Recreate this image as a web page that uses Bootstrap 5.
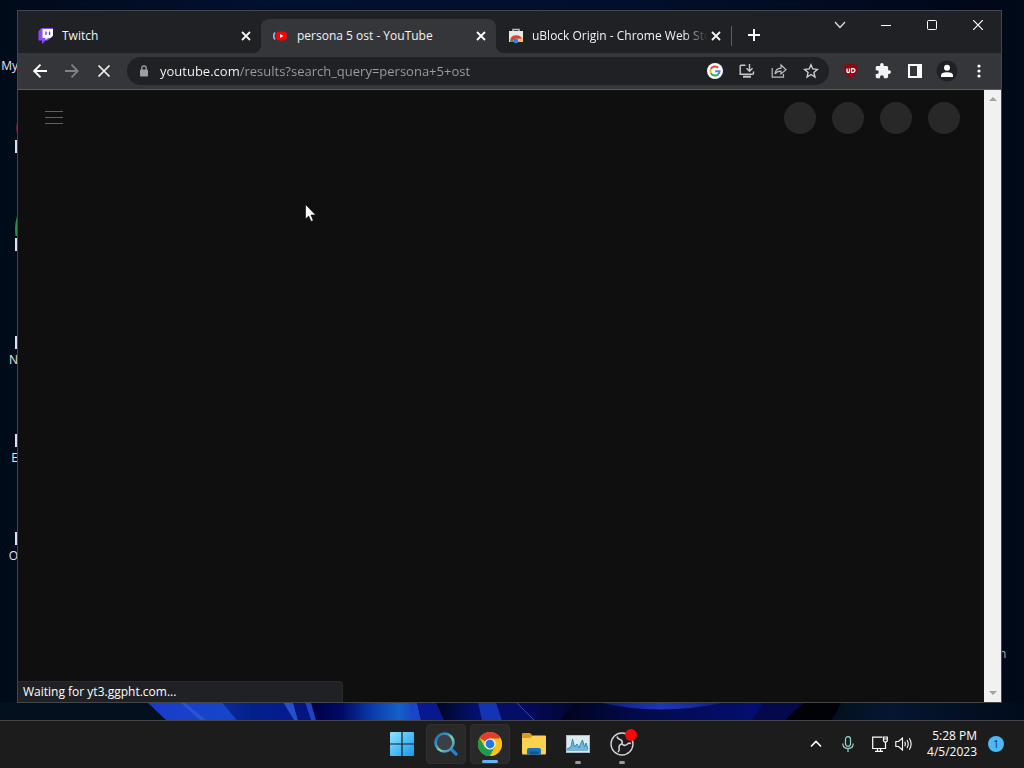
<!DOCTYPE html>
<html lang="en">
<head>
<meta charset="utf-8">
<meta name="viewport" content="width=device-width, initial-scale=1">
<title>Desktop</title>
<link href="https://cdn.jsdelivr.net/npm/bootstrap@5.3.0/dist/css/bootstrap.min.css" rel="stylesheet">
<style>
:root { --ui: "Open Sans", "Noto Sans", sans-serif; }
body { font-family: var(--ui); font-size: 12px; line-height: 16px; color: #fff; background: #000b1c; }
button { color: inherit; background: none; border: 0; padding: 0; }
svg { display: block; flex: none; }
.desk { min-height: 0; background: linear-gradient(90deg, #000b1a 0, #001030 25%, #00102c 60%, #00081a 96%, #000a18 100%); }
.wallpaper { left: 0; bottom: 0; width: 100%; height: 18px; }
.side-left { width: 17px; padding-top: 39px; }
.shortcut { height: 98px; }
.shortcut-pic { height: 19px; padding-top: 3px; }
.shortcut-pic span { display: block; width: 2px; height: 13px; background: #dde1ea; }
.shortcut-lbl { height: 16px; margin-right: -1px; color: #e3e6ea; }
.app-edges { left: 15px; top: 110px; }
.side-right { width: 22px; padding-bottom: 58px; text-indent: -3px; color: #aab4c0; }
.browser { margin: 10px 0 17px; border: 1px solid #45474b; min-width: 0; background: #0f0f0f; z-index: 1; }
.tabstrip { background: #202124; height: 42px; padding-left: 8px; }
.tab-item { flex: 0 1 235px; min-width: 0; height: 34px; margin-top: 8px; padding: 0 7px 0 12px; position: relative; }
.tab-item.on { background: #35363a; border-radius: 8px 8px 0 0; }
.tab-item.on::before, .tab-item.on::after { content: ""; position: absolute; bottom: 0; width: 8px; height: 8px; }
.tab-item.on::before { left: -8px; background: radial-gradient(circle at 0 0, transparent 8px, #35363a 8px); }
.tab-item.on::after { right: -8px; background: radial-gradient(circle at 100% 0, transparent 8px, #35363a 8px); }
.tab-title { min-width: 0; font-size: 12px; margin-left: 8px; text-align: left; white-space: nowrap; overflow: hidden; color: #f1f3f4; }
.fade-end { -webkit-mask-image: linear-gradient(90deg, #000 86%, transparent 100%); mask-image: linear-gradient(90deg, #000 86%, transparent 100%); }
.tab-x, .lock { width: 16px; height: 16px; flex: none; }
.tab-sep { width: 1px; height: 20px; margin-top: 15px; background: #5b5d61; }
.new-tab { width: 28px; height: 28px; margin: 10px 0 0 8px; }
.winctl { width: 46px; height: 28px; }
.toolbar { background: #35363a; height: 37px; border-bottom: 1px solid #5c5d60; padding: 0 6px; }
.tool { width: 32px; height: 32px; }
.omni { height: 28px; background: #202124; border-radius: 14px; margin: 0 6px 0 7px; padding: 0 2px 0 9px; }
.url { min-width: 0; height: 22px; border: 0; outline: 0; padding: 0; margin-left: 8px; font-size: 13px;
  color: transparent; -webkit-text-fill-color: transparent;
  background: linear-gradient(90deg, #fff 80px, #9aa0a6 80px); -webkit-background-clip: text; background-clip: text; }
.masthead { height: 56px; padding: 0 24px 0 27px; }
.ghost { width: 32px; height: 32px; background: #282828; }
.scroller { width: 17px; background: #f1f1f1; padding: 7px 0 7px; }
.status { left: 0; bottom: 0; width: 325px; height: 21px; line-height: 20px; padding-left: 5px; background: #202124; border: 1px solid #292a2d; border-width: 1px 1px 0 0; border-radius: 0 4px 0 0; }
.pointer { left: 287px; top: 114px; }
.taskbar { height: 48px; background: #1c1c1c; border-top: 1px solid #434547; padding-bottom: 1px; }
.task { width: 40px; height: 40px; position: relative; border-radius: 4px; }
.task.lit { background: #292929; border: 1px solid #303030; }
.task.open::after { content: ""; position: absolute; left: 50%; bottom: 0; width: 6px; height: 3px; margin-left: -3px; border-radius: 2px; background: #9a9a9a; }
.task.active::after { width: 16px; margin-left: -8px; background: #60b5ee; }
.tray-ico { width: 32px; height: 40px; }
.tray-ico.slim { width: 24px; }
.clock { margin-right: 11px; padding-left: 11px; text-align: right; white-space: nowrap; }
.notif { width: 16px; height: 16px; margin-right: 20px; background: #4cb8f5; color: #10354c; font-size: 10px; }
</style>
</head>
<body>
<div class="d-flex flex-column vh-100 overflow-hidden">
  <main class="desk flex-grow-1 d-flex position-relative overflow-hidden">
    <svg class="wallpaper position-absolute" viewBox="0 0 1024 18" preserveAspectRatio="none" aria-hidden="true">
      <defs>
        <linearGradient id="sea"><stop offset="0" stop-color="#1a3cc8"/><stop offset="1" stop-color="#1646cc"/></linearGradient>
        <linearGradient id="deep"><stop offset="0" stop-color="#0a2a9c"/><stop offset=".4" stop-color="#03208a"/><stop offset="1" stop-color="#051a90"/></linearGradient>
        <linearGradient id="glow"><stop offset="0" stop-color="#000046"/><stop offset=".3" stop-color="#000a66"/><stop offset=".6" stop-color="#0b3cae"/><stop offset=".85" stop-color="#1460c8"/><stop offset="1" stop-color="#1648c0"/></linearGradient>
        <linearGradient id="fold"><stop offset="0" stop-color="#01051e"/><stop offset=".5" stop-color="#030c50"/><stop offset="1" stop-color="#04107a"/></linearGradient>
        <linearGradient id="dusk"><stop offset="0" stop-color="#040a60"/><stop offset="1" stop-color="#01041e"/></linearGradient>
        <linearGradient id="far"><stop offset="0" stop-color="#01031a"/><stop offset=".25" stop-color="#020a48"/><stop offset=".7" stop-color="#030e70"/><stop offset="1" stop-color="#01031a"/></linearGradient>
        <linearGradient id="crest"><stop offset="0" stop-color="#0a1a80"/><stop offset=".5" stop-color="#1c38b8"/><stop offset="1" stop-color="#0a1c8c"/></linearGradient>
        <linearGradient id="night"><stop offset="0" stop-color="#03101f"/><stop offset=".3" stop-color="#051630"/><stop offset="1" stop-color="#010b1b"/></linearGradient>
      </defs>
      <rect width="1024" height="18" fill="#03111f"/>
      <path d="M147 0H222L237 18H166Z" fill="url(#sea)"/>
      <path d="M180 0H184L206 18H200Z" fill="#2e52d4"/>
      <path d="M222 0H284L298 18H237Z" fill="url(#deep)"/>
      <path d="M283 0H293L298 18H294Z" fill="#2450cc"/>
      <path d="M293 0H306L312 18H298Z" fill="#041480"/>
      <path d="M305 0H311L316 18H311Z" fill="#1e44c4"/>
      <path d="M311 0H410L414 18H316Z" fill="url(#glow)"/>
      <path d="M409 0H417L421 18H413Z" fill="#1c44c8"/>
      <path d="M417 0H436L444 18H421Z" fill="#0a1890"/>
      <path d="M436 0H480L484 18H444Z" fill="url(#fold)"/>
      <path d="M478 0H496L502 18H482Z" fill="#1434b4"/>
      <path d="M496 0H517L535 18H502Z" fill="#050e66"/>
      <path d="M517 0H600V18H535Z" fill="url(#dusk)"/>
      <path d="M516 0L534 18" stroke="#3348a8" fill="none"/>
      <path d="M575 0H842L832 18H560Z" fill="url(#far)"/>
      <path d="M598 0Q660 15 726 0Z" fill="url(#crest)"/>
      <path d="M764 0H810L780 18H752Z" fill="#05084a"/>
      <path d="M805 0H842L832 18H785Z" fill="#010208"/>
      <path d="M842 0H1024V18H832Z" fill="url(#night)"/>
    </svg>

    <div class="side-left position-relative flex-shrink-0">
      <div class="shortcut d-flex flex-column align-items-end"><div class="shortcut-pic"></div><div class="shortcut-lbl">My</div></div>
      <div class="shortcut d-flex flex-column align-items-end"><div class="shortcut-pic"><span></span></div></div>
      <div class="shortcut d-flex flex-column align-items-end"><div class="shortcut-pic"><span></span></div></div>
      <div class="shortcut d-flex flex-column align-items-end"><div class="shortcut-pic"><span></span></div><div class="shortcut-lbl">N</div></div>
      <div class="shortcut d-flex flex-column align-items-end"><div class="shortcut-pic"><span></span></div><div class="shortcut-lbl">E</div></div>
      <div class="shortcut d-flex flex-column align-items-end"><div class="shortcut-pic"><span></span></div><div class="shortcut-lbl">O</div></div>
      <svg class="app-edges position-absolute" width="2" height="140" viewBox="0 0 2 140" aria-hidden="true"><path d="M2 12Q.5 18 2 24Z" fill="#a3222e"/><path d="M2 106Q-1 116 .5 126H2Z" fill="#2f8a4b"/></svg>
    </div>

    <section class="browser flex-grow-1 d-flex flex-column position-relative" aria-label="Browser">
      <div class="tabstrip d-flex flex-shrink-0">
        <div class="tab-item d-flex align-items-center">
          <svg width="16" height="16" viewBox="0 0 16 16" aria-hidden="true"><path d="M3.500 0L.5 3.200V12.500H4V16L7.500 12.500H10L15 8V0Z" fill="#8a4bf0"/><path d="M4.500 1H15V7.500L12.500 10H10L7.500 12.300V10H4.500Z" fill="#fff"/><path d="M8 3.500V7M11.500 3.500V7" stroke="#6a35c8" stroke-width="1.300"/></svg>
          <button class="tab-title flex-grow-1">Twitch</button>
          <button class="tab-x d-flex align-items-center justify-content-center" aria-label="Close tab"><svg width="10" height="10" viewBox="0 0 10 10"><path d="M1 1L9 9M9 1L1 9" stroke="#f4f4f4" stroke-width="1.800"/></svg></button>
        </div>
        <div class="tab-item on d-flex align-items-center">
          <svg width="16" height="16" viewBox="0 0 16 16" aria-hidden="true"><path d="M2 4.500Q-.5 8 2 11.500" fill="none" stroke="#8ab4f8" stroke-width="1.700"/><rect x="3" y="3.500" width="11" height="9" rx="3.500" fill="#f00"/><path d="M7 6L10.500 8L7 10Z" fill="#fff"/></svg>
          <button class="tab-title flex-grow-1">persona 5 ost - YouTube</button>
          <button class="tab-x d-flex align-items-center justify-content-center" aria-label="Close tab"><svg width="10" height="10" viewBox="0 0 10 10"><path d="M1 1L9 9M9 1L1 9" stroke="#fff" stroke-width="1.800"/></svg></button>
        </div>
        <div class="tab-item d-flex align-items-center">
          <svg width="16" height="16" viewBox="0 0 16 16" aria-hidden="true"><path d="M5 4V1.500H11V4" fill="none" stroke="#b9bcc0" stroke-width="1.500"/><path d="M1 3H15V14H1Z" fill="#e8e8e8"/><path d="M2.500 14Q1.500 7.500 8 7.300Q13 7.300 14.500 11.500L8 10.500Q5.500 11 5 14Z" fill="#e33b2e"/><path d="M2.500 14Q2 11.500 3 9.500L6 14Z" fill="#2f9e50"/><path d="M10 14Q11.500 12 11 10.500H14.500L15 14Z" fill="#fbc02d"/><circle cx="8" cy="13" r="2.400" fill="#3b7ded"/></svg>
          <button class="tab-title fade-end flex-grow-1">uBlock Origin - Chrome Web Store</button>
          <button class="tab-x d-flex align-items-center justify-content-center" aria-label="Close tab"><svg width="10" height="10" viewBox="0 0 10 10"><path d="M1 1L9 9M9 1L1 9" stroke="#f4f4f4" stroke-width="1.800"/></svg></button>
        </div>
        <div class="tab-sep"></div>
        <button class="new-tab d-flex align-items-center justify-content-center" aria-label="New tab"><svg width="12" height="12" viewBox="0 0 12 12"><path d="M6 0V12M0 6H12" stroke="#fff" stroke-width="2"/></svg></button>
        <div class="d-flex ms-auto flex-shrink-0">
          <button class="winctl d-flex align-items-center justify-content-center" aria-label="Search tabs"><svg width="12" height="8" viewBox="0 0 12 8"><path d="M1 1L6 6.500L11 1" fill="none" stroke="#e2e2e2" stroke-width="1.200"/></svg></button>
          <button class="winctl d-flex align-items-center justify-content-center" aria-label="Minimize"><svg width="10" height="10" viewBox="0 0 10 10"><path d="M0 5.500H10" stroke="#fff"/></svg></button>
          <button class="winctl d-flex align-items-center justify-content-center" aria-label="Maximize"><svg width="10" height="10" viewBox="0 0 10 10"><rect x=".5" y=".5" width="9" height="9" rx="1" fill="none" stroke="#fff"/></svg></button>
          <button class="winctl d-flex align-items-center justify-content-center" aria-label="Close"><svg width="10" height="10" viewBox="0 0 10 10"><path d="M0 0L10 10M10 0L0 10" stroke="#fff" stroke-width="1.200"/></svg></button>
        </div>
      </div>

      <div class="toolbar d-flex align-items-center flex-shrink-0">
        <button class="tool d-flex align-items-center justify-content-center" aria-label="Back"><svg width="14" height="14" viewBox="0 0 14 14"><path d="M14 7H1.500M7.500 .7L1.200 7L7.500 13.300" fill="none" stroke="#fff" stroke-width="1.900"/></svg></button>
        <button class="tool d-flex align-items-center justify-content-center" aria-label="Forward"><svg width="14" height="14" viewBox="0 0 14 14"><path d="M0 7H12.500M6.500 .7L12.800 7L6.500 13.300" fill="none" stroke="#808285" stroke-width="1.800"/></svg></button>
        <button class="tool d-flex align-items-center justify-content-center" aria-label="Stop"><svg width="14" height="14" viewBox="0 0 14 14"><path d="M1.500 1.500L12.500 12.500M12.500 1.500L1.500 12.500" stroke="#f4f4f4" stroke-width="1.700"/></svg></button>
        <div class="omni d-flex align-items-center flex-grow-1">
          <span class="lock d-flex align-items-center justify-content-center"><svg width="10" height="12" viewBox="0 0 10 12"><rect x="1" y="4.500" width="8" height="7" rx="1" fill="#9aa0a6"/><path d="M2.800 5V3Q2.800 1 5 1T7.200 3V5" fill="none" stroke="#9aa0a6" stroke-width="1.300"/></svg></span>
          <input class="url flex-grow-1" type="text" aria-label="Address" value="youtube.com/results?search_query=persona+5+ost">
          <button class="tool d-flex align-items-center justify-content-center" aria-label="Google"><svg width="16" height="16" viewBox="0 0 16 16"><circle cx="8" cy="8" r="8" fill="#fff"/><g fill="none" stroke-width="2"><path d="M11.200 4.800A4.600 4.600 0 0 0 3.900 5.900" stroke="#ea4335"/><path d="M3.900 5.900A4.600 4.600 0 0 0 3.900 10.100" stroke="#fbbc05"/><path d="M3.900 10.100A4.600 4.600 0 0 0 11 11.400" stroke="#34a853"/><path d="M11 11.400A4.600 4.600 0 0 0 12.600 8.200H8.200" stroke="#4285f4"/></g></svg></button>
          <button class="tool d-flex align-items-center justify-content-center" aria-label="Install"><svg width="16" height="16" viewBox="0 0 16 16" fill="none" stroke="#c6c9cd" stroke-width="1.400"><path d="M6.500 2.200H2.200Q1.200 2.200 1.200 3.200V11.200H13.500Q14.500 11.200 14.500 10.200V8.500"/><path d="M4 13.700H12" stroke-width="2"/><path d="M10.500 1V8M7.500 5.300L10.500 8.300L13.500 5.300"/></svg></button>
          <button class="tool d-flex align-items-center justify-content-center" aria-label="Share"><svg width="16" height="16" viewBox="0 0 16 16" fill="none" stroke="#b9bcc0" stroke-width="1.200"><path d="M1.200 5V14.200H12.500V11"/><path d="M4 11Q4.500 5.500 10 5.200V2L15 6.700L10 11V8.200Q6 8 4 11Z"/></svg></button>
          <button class="tool d-flex align-items-center justify-content-center" aria-label="Bookmark"><svg width="16" height="16" viewBox="0 0 16 16"><path d="M8 1.700L9.800 6L14.400 6.400L10.900 9.400L12 14L8 11.500L4 14L5.100 9.400L1.600 6.400L6.200 6Z" fill="none" stroke="#d0d2d5" stroke-width="1.300"/></svg></button>
        </div>
        <button class="tool d-flex align-items-center justify-content-center" aria-label="uBlock"><svg width="16" height="16" viewBox="0 0 16 16"><path d="M8 .8Q11 2 15 1.800Q15.500 12 8 15.500Q.5 12 1 1.800Q5 2 8 .8Z" fill="#8f0610"/><path d="M4 5.500V8.200Q4 9.500 5.200 9.500T6.500 8.200V5.500" fill="none" stroke="#fff" stroke-width="1.300"/><path d="M8.600 5.700H9.700Q11.900 5.700 11.900 7.500T9.700 9.400H8.600Z" fill="none" stroke="#fff" stroke-width="1.200"/></svg></button>
        <button class="tool d-flex align-items-center justify-content-center" aria-label="Extensions"><svg width="16" height="16" viewBox="1 1 22 22"><path d="M20.500 11H19V7c0-1.100-.9-2-2-2h-4V3.500a2.500 2.500 0 0 0-5 0V5H4c-1.100 0-2 .9-2 2v3.800h1.500a2.700 2.700 0 0 1 0 5.400H2V20c0 1.100.9 2 2 2h3.800v-1.500a2.700 2.700 0 0 1 5.400 0V22H17c1.100 0 2-.9 2-2v-4h1.500a2.500 2.500 0 0 0 0-5z" fill="#f1f3f4"/></svg></button>
        <button class="tool d-flex align-items-center justify-content-center" aria-label="Side panel"><svg width="14" height="14" viewBox="0 0 14 14"><path d="M0 0H14V14H0ZM2 2V12H9V2Z" fill="#fff" fill-rule="evenodd"/></svg></button>
        <button class="tool d-flex align-items-center justify-content-center" aria-label="Profile"><svg width="22" height="22" viewBox="0 0 22 22"><circle cx="11" cy="11" r="10.500" fill="#202124"/><circle cx="11" cy="7.800" r="3" fill="#fff"/><path d="M5 17V15.500Q5 12.200 11 12.200T17 15.500V17Z" fill="#fff"/></svg></button>
        <button class="tool d-flex align-items-center justify-content-center" aria-label="Menu"><svg width="4" height="14" viewBox="0 0 4 14" fill="#fff"><circle cx="2" cy="2" r="1.600"/><circle cx="2" cy="7" r="1.600"/><circle cx="2" cy="12" r="1.600"/></svg></button>
      </div>

      <div class="d-flex flex-grow-1 position-relative">
        <div class="flex-grow-1">
          <header class="masthead d-flex align-items-center justify-content-between">
            <button aria-label="Guide"><svg width="18" height="14" viewBox="0 0 18 14"><path d="M0 .5H18M0 6.500H18M0 12.500H18" stroke="#62625c"/></svg></button>
            <div class="d-flex gap-3">
              <span class="ghost rounded-circle"></span><span class="ghost rounded-circle"></span><span class="ghost rounded-circle"></span><span class="ghost rounded-circle"></span>
            </div>
          </header>
        </div>
        <div class="scroller d-flex flex-column align-items-center justify-content-between flex-shrink-0">
          <svg width="8" height="4" viewBox="0 0 8 4"><path d="M0 4L4 0L8 4Z" fill="#a3a3a3"/></svg>
          <svg width="8" height="4" viewBox="0 0 8 4"><path d="M0 0L4 4L8 0Z" fill="#a3a3a3"/></svg>
        </div>
        <div class="status position-absolute">Waiting for yt3.ggpht.com...</div>
        <svg class="pointer position-absolute" width="12" height="19" viewBox="0 0 12 19" aria-hidden="true"><path d="M.5 .5V15L3.700 12L6 17.500L8.300 16.500L6 11H10.700Z" fill="#fff" stroke="#000" stroke-width=".6"/></svg>
      </div>
    </section>

    <div class="side-right flex-shrink-0 d-flex align-items-end">n</div>
  </main>

  <footer class="taskbar row g-0 flex-nowrap align-items-center flex-shrink-0">
    <div class="col"></div>
    <nav class="col-auto d-flex gap-1" aria-label="Apps">
      <button class="task d-flex align-items-center justify-content-center" aria-label="Start"><svg width="24" height="24" viewBox="0 0 24 24"><defs><linearGradient id="win" x2="1" y2="1"><stop stop-color="#8ce4fd"/><stop offset="1" stop-color="#149af0"/></linearGradient></defs><path d="M0 1Q0 0 1 0H11.400V11.400H0ZM12.600 0H23Q24 0 24 1V11.400H12.600ZM0 12.600H11.400V24H1Q0 24 0 23ZM12.600 12.600H24V23Q24 24 23 24H12.600Z" fill="url(#win)"/></svg></button>
      <button class="task lit d-flex align-items-center justify-content-center" aria-label="Search"><svg width="24" height="24" viewBox="0 0 24 24"><defs><linearGradient id="lens" x2="1" y2="1"><stop stop-color="#1c67b4"/><stop offset=".4" stop-color="#3ba4c0"/><stop offset=".55" stop-color="#7cd6b0"/><stop offset="1" stop-color="#2478cc"/></linearGradient></defs><path d="M17 17L22 22" stroke="#2c7fd0" stroke-width="3.200" stroke-linecap="round"/><circle cx="10.500" cy="10.500" r="9" fill="#3a4046" stroke="url(#lens)" stroke-width="2.600"/></svg></button>
      <button class="task lit open active d-flex align-items-center justify-content-center" aria-label="Chrome"><svg width="24" height="24" viewBox="0 0 24 24"><circle cx="12" cy="12" r="12" fill="#fbc116"/><path d="M12 12L1.600 6A12 12 0 0 1 22.400 6Z" fill="#e33b2e"/><path d="M1.600 6A12 12 0 0 0 12 24L17.200 15L12 12L6.800 15Z" fill="#1e9c4c"/><path d="M12 6.500H22.700A12 12 0 0 1 12 24L17 14.500Z" fill="#fbc116"/><circle cx="12" cy="12" r="5.600" fill="#fff"/><circle cx="12" cy="12" r="4.400" fill="#2376e5"/></svg></button>
      <button class="task d-flex align-items-center justify-content-center" aria-label="Files"><svg width="24" height="22" viewBox="0 0 24 22"><path d="M0 1Q0 0 1 0H8L11 3V7H0Z" fill="#dc9b17"/><path d="M0 5H8L11 2.500H23Q24 2.500 24 3.500V20Q24 21.500 23 21.500H1Q0 21.500 0 20Z" fill="#fbd152"/><path d="M5 21.500V17Q5 15 7 15H17Q19 15 19 17V21.500Z" fill="#1673bb"/><path d="M7.500 18.500H16.500V21.500H7.500Z" fill="#0f5793"/></svg></button>
      <button class="task open d-flex align-items-center justify-content-center" aria-label="Monitor"><svg width="24" height="18" viewBox="0 0 24 18"><rect x=".5" y=".5" width="23" height="17" fill="#dcebf2" stroke="#afbec6"/><path d="M1 16V14L5 12L6.500 4L8.500 12L11 9L13 13L15 8L16.500 5L18.500 12L20 8L22 14V16Z" fill="#74b5d8"/><path d="M1 14L5 12L6.500 4L8.500 12L11 9L13 13L15 8L16.500 5L18.500 12L20 8L22 14" fill="none" stroke="#1f84b8" stroke-width=".9"/></svg></button>
      <button class="task open d-flex align-items-center justify-content-center" aria-label="OBS recording"><svg width="24" height="24" viewBox="0 0 24 24" overflow="visible"><circle cx="12" cy="12" r="11" fill="#1d1b20" stroke="#d3d3d3" stroke-width="1.400"/><g fill="none" stroke="#cfcfcf" stroke-width="1.600"><path id="blade" d="M12 12.500Q13 8.500 10 7.500Q7.500 7 7 4.500"/><use href="#blade" transform="rotate(120 12 12)"/><use href="#blade" transform="rotate(240 12 12)"/></g><circle cx="21" cy="3" r="6" fill="#f50808"/></svg></button>
    </nav>
    <div class="col d-flex align-items-center justify-content-end">
      <button class="tray-ico d-flex align-items-center justify-content-center" aria-label="Hidden icons"><svg width="12" height="8" viewBox="0 0 12 8"><path d="M1 6.500L6 1.500L11 6.500" fill="none" stroke="#fff" stroke-width="1.600"/></svg></button>
      <button class="tray-ico d-flex align-items-center justify-content-center" aria-label="Microphone"><svg width="12" height="16" viewBox="0 0 12 16" fill="none" stroke="#9bd6d2" stroke-width="1.200"><rect x="3.500" y=".7" width="5" height="9.600" rx="2.500"/><path d="M.8 7.500Q.8 12.500 6 12.500T11.200 7.500M6 12.500V16"/></svg></button>
      <button class="tray-ico slim ms-1 d-flex align-items-center justify-content-center" aria-label="Network"><svg width="16" height="16" viewBox="0 0 16 16" fill="none" stroke="#fff" stroke-width="1.200"><path d="M10.500 1.200H.7V12.500H13.500V7M3 15.300H11M5.500 12.500V15M8.500 12.500V15"/><path d="M11.500 1H15.300V5L13.500 6.500L11.500 5ZM11.500 3H15"/></svg></button>
      <button class="tray-ico slim d-flex align-items-center justify-content-center" aria-label="Volume"><svg width="18" height="14" viewBox="0 0 18 14" fill="none" stroke="#fff" stroke-width="1.100"><path d="M.8 4.500H3.500L7.500 1V13L3.500 9.500H.8Z"/><path d="M9.700 4.800Q11 7 9.700 9.200M12 3Q14.500 7 12 11M14.300 1.200Q18 7 14.300 12.800"/></svg></button>
      <div class="clock">5:28 PM<br>4/5/2023</div>
      <span class="notif rounded-circle text-center">1</span>
    </div>
  </footer>
</div>
</body>
</html>
